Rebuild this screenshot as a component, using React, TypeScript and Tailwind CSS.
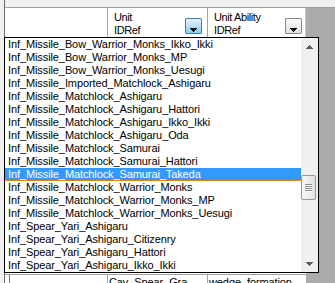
import React from "react";

const items = [
  "Inf_Missile_Bow_Warrior_Monks_Ikko_Ikki",
  "Inf_Missile_Bow_Warrior_Monks_MP",
  "Inf_Missile_Bow_Warrior_Monks_Uesugi",
  "Inf_Missile_Imported_Matchlock_Ashigaru",
  "Inf_Missile_Matchlock_Ashigaru",
  "Inf_Missile_Matchlock_Ashigaru_Hattori",
  "Inf_Missile_Matchlock_Ashigaru_Ikko_Ikki",
  "Inf_Missile_Matchlock_Ashigaru_Oda",
  "Inf_Missile_Matchlock_Samurai",
  "Inf_Missile_Matchlock_Samurai_Hattori",
  "Inf_Missile_Matchlock_Samurai_Takeda",
  "Inf_Missile_Matchlock_Warrior_Monks",
  "Inf_Missile_Matchlock_Warrior_Monks_MP",
  "Inf_Missile_Matchlock_Warrior_Monks_Uesugi",
  "Inf_Spear_Yari_Ashigaru",
  "Inf_Spear_Yari_Ashigaru_Citizenry",
  "Inf_Spear_Yari_Ashigaru_Hattori",
  "Inf_Spear_Yari_Ashigaru_Ikko_Ikki",
];
const SELECTED = 10;

function Tri({ up = false, color }: { up?: boolean; color: string }) {
  const rows = up ? [3, 2, 1, 0] : [0, 1, 2, 3];
  return (
    <svg width="7" height="4" viewBox="0 0 7 4" shapeRendering="crispEdges">
      {rows.map((inset, y) => (
        <rect key={y} x={inset} y={y} width={7 - inset * 2} height={1} fill={color} />
      ))}
    </svg>
  );
}

export default function App() {
  return (
    <div className="relative flex w-[335px] h-[283px] overflow-hidden bg-[#f0f0f0] font-[Arial,sans-serif] text-[11px] tracking-[-0.1px] text-black">
      {/* left form strip */}
      <div className="w-[4px] shrink-0 bg-[#f0f0f0]" />
      {/* grid control */}
      <div className="flex flex-1 flex-col border-l border-[#696969]">
        <div className="h-[8px] shrink-0 bg-[#f0f0f0] border-b border-[#a0a0a0]" />
        <div className="flex flex-1 flex-col bg-[#ababab]">
          {/* header */}
          <div className="flex h-[29px] w-[301px] shrink-0 bg-white tracking-[-0.4px]">
            <div className="w-[103px] border-r border-[#a0a0a0]" />
            <div className="flex w-[100px] justify-between border-r border-[#a0a0a0]">
              <div className="pl-[6px] pt-[3px] leading-[13px]">
                <div>Unit</div>
                <div>IDRef</div>
              </div>
              <div className="mb-[3px] mr-[5px] flex h-[16px] w-[17px] self-end justify-center rounded-[1px] border border-[#3c7fb1] bg-linear-to-b from-[#e3f3fc] to-[#8ccbf1] pt-[9px]">
                <Tri color="#000" />
              </div>
            </div>
            <div className="flex w-[98px] justify-between border-r border-[#c8c8c8]">
              <div className="pl-[6px] pt-[3px] leading-[13px]">
                <div>Unit Ability</div>
                <div>IDRef</div>
              </div>
              <div className="mb-[3px] mr-[3px] flex h-[16px] w-[17px] self-end justify-center rounded-[1px] border border-[#8a8a8a] bg-linear-to-b from-[#fafafa] to-[#e2e2e2] pt-[9px]">
                <Tri color="#000" />
              </div>
            </div>
          </div>
          {/* body rows (covered by dropdown) */}
          <div className="h-[237px] w-[301px] shrink-0 bg-white" />
          <div className="flex h-[22px] w-[301px] shrink-0 border-t border-[#a0a0a0] bg-white leading-[13px]">
            <div className="w-[103px] border-r border-[#a0a0a0]">
              <div className="h-full w-[5px] border-r border-[#7a7a7a]" />
            </div>
            <div className="w-[100px] overflow-hidden whitespace-nowrap border-r border-[#a0a0a0] pl-[1px] pt-[1px]">
              Cav_Spear_Gra
            </div>
            <div className="w-[98px] overflow-hidden whitespace-nowrap pl-[1px] pt-[1px]">
              wedge_formation
            </div>
          </div>
        </div>
      </div>

      {/* dropdown list */}
      <div className="absolute left-[4px] top-[37px] flex h-[236px] w-[315px] border border-black bg-white">
        <div className="flex w-[296px] flex-col">
          {items.map((t, i) =>
            i === SELECTED ? (
              <div
                key={t}
                className="h-[13px] whitespace-nowrap border-b border-dotted border-[#e8901f] bg-[#3399ff] pl-[3px] leading-[13px] text-white"
              >
                {t}
              </div>
            ) : (
              <div key={t} className="h-[13px] whitespace-nowrap pl-[3px] leading-[13px]">
                {t}
              </div>
            )
          )}
        </div>
        {/* scrollbar */}
        <div className="flex w-[17px] flex-col bg-[#f0f0f0]">
          <div className="flex h-[17px] shrink-0 items-center justify-center">
            <Tri up color="#5c5c5c" />
          </div>
          <div className="h-[120px] shrink-0" />
          <div className="flex h-[25px] w-[15px] shrink-0 flex-col items-center justify-center rounded-[2px] border border-[#979797] bg-linear-to-r from-[#f8f8f8] to-[#e1e1e1]">
            {[0, 1, 2, 3].map((k) => (
              <div key={k} className="flex flex-col">
                <div className="h-[1px] w-[7px] bg-[#8a8a8a]" />
                <div className="h-[1px] w-[7px] bg-white" />
              </div>
            ))}
          </div>
          <div className="flex-1" />
          <div className="flex h-[17px] shrink-0 items-center justify-center">
            <Tri color="#5c5c5c" />
          </div>
        </div>
      </div>
    </div>
  );
}
